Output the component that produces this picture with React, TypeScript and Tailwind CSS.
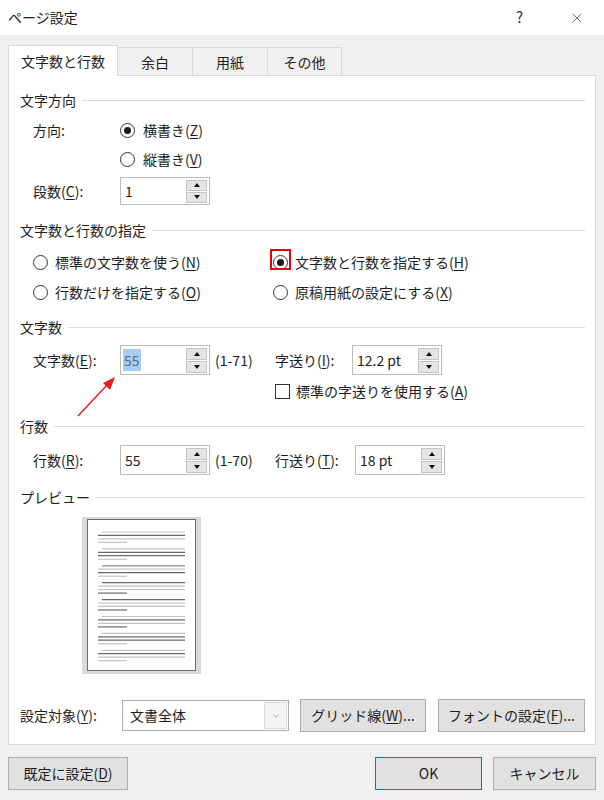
import { X, ChevronDown } from 'lucide-react'

const font = { fontFamily: '"Noto Sans CJK JP", "Noto Sans", sans-serif' }

function SectionHeader({ label, className }: { label: string; className: string }) {
  return (
    <div className={`flex items-center h-[20px] ${className}`}>
      <span className="whitespace-nowrap">{label}</span>
      <div className="flex-1 h-px bg-[#dcdcdc] ml-[6px]" />
    </div>
  )
}

function Radio({ checked }: { checked?: boolean }) {
  return (
    <span className="w-[15px] h-[15px] rounded-full border border-[#333] bg-white flex items-center justify-center shrink-0">
      {checked && <span className="w-[7px] h-[7px] rounded-full bg-[#1a1a1a]" />}
    </span>
  )
}

function SpinButtons({ small }: { small?: boolean }) {
  const btn = small
    ? 'w-[21px] h-[11px] bg-[#e5e5e5] border border-[#c4c4c4] flex items-center justify-center'
    : 'w-[21px] h-[12px] bg-[#e5e5e5] border border-[#c4c4c4] flex items-center justify-center'
  return (
    <div className="ml-auto mr-[2px] flex flex-col gap-px">
      <div className={btn}>
        <span className="w-0 h-0 border-l-[3.5px] border-r-[3.5px] border-b-[4px] border-l-transparent border-r-transparent border-b-[#111]" />
      </div>
      <div className={btn}>
        <span className="w-0 h-0 border-l-[3.5px] border-r-[3.5px] border-t-[4px] border-l-transparent border-r-transparent border-t-[#111]" />
      </div>
    </div>
  )
}

function U({ c }: { c: string }) {
  return <span className="underline underline-offset-2">{c}</span>
}

// preview page lines: [indented, full, full, short]
const groups: string[][] = [
  ['#c4c4c4', '#6a6a6a', '#c4c4c4', '#c4c4c4'],
  ['#c4c4c4', '#6a6a6a', '#6a6a6a', '#c4c4c4'],
  ['#8a8a8a', '#c4c4c4', '#6a6a6a', '#c4c4c4'],
  ['#6a6a6a', '#c4c4c4', '#c4c4c4', '#6a6a6a'],
  ['#6a6a6a', '#c4c4c4', '#c4c4c4', '#6a6a6a'],
  ['#c4c4c4', '#6a6a6a', '#c4c4c4', '#6a6a6a'],
  ['#c4c4c4', '#6a6a6a', '#6a6a6a', '#c4c4c4'],
  ['#c4c4c4', '#6a6a6a', '#c4c4c4', '#c4c4c4'],
]

function PreviewPage() {
  return (
    <div className="ml-[62px] mt-[10px] w-[119px] h-[157px] bg-[#d9d9d9] pl-[5px] pt-[2px]">
      <div className="w-[109px] h-[152px] bg-white border border-[#6b6b6b]">
        <svg width="107" height="150" viewBox="0 0 107 150">
          {groups.map((g, i) => {
            const y = 12 + i * 16.9
            return (
              <g key={i} strokeWidth="1.2">
                <line x1="14" x2="97" y1={y} y2={y} stroke={g[0]} />
                <line x1="10" x2="97" y1={y + 3.4} y2={y + 3.4} stroke={g[1]} />
                <line x1="10" x2="97" y1={y + 6.8} y2={y + 6.8} stroke={g[2]} />
                <line x1="10" x2="39" y1={y + 10.4} y2={y + 10.4} stroke={g[3]} />
              </g>
            )
          })}
        </svg>
      </div>
    </div>
  )
}

export default function App() {
  return (
    <div
      className="relative w-[604px] h-[800px] bg-[#f0f0f0] text-[14px] text-[#1e1e1e] overflow-hidden"
      style={font}
    >
      {/* Title bar */}
      <div className="h-[35px] bg-white flex items-center pl-[8px]">
        <span className="text-[14px] text-[#222]">ページ設定</span>
        <span className="ml-auto mr-[46px] text-[15px] text-[#333]">?</span>
        <X size={16} strokeWidth={1} className="mr-[19px] text-[#333]" />
      </div>

      {/* Tabs */}
      <div className="flex items-end mt-[10px] px-[8px] h-[30px]">
        <div className="relative z-10 w-[110px] h-[31px] -mb-px bg-white border border-b-0 border-[#d9d9d9] flex items-center justify-center">
          文字数と行数
        </div>
        <div className="w-[75px] h-[28px] border border-l-0 border-b-0 border-[#d9d9d9] flex items-center justify-center pt-[1px]">
          余白
        </div>
        <div className="w-[75px] h-[28px] border border-l-0 border-b-0 border-[#d9d9d9] flex items-center justify-center pt-[1px]">
          用紙
        </div>
        <div className="w-[74px] h-[28px] border border-l-0 border-b-0 border-[#d9d9d9] flex items-center justify-center pt-[1px]">
          その他
        </div>
      </div>

      {/* Panel */}
      <div className="mx-[8px] w-[588px] h-[670px] bg-white border border-[#d9d9d9] pl-[11px] pr-[10px] flex flex-col">
        <SectionHeader label="文字方向" className="mt-[14px]" />

        <div className="flex items-center h-[20px] mt-[10px]">
          <span className="ml-[13px] w-[87px]">方向:</span>
          <Radio checked />
          <span className="ml-[8px]">
            横書き(<U c="Z" />)
          </span>
        </div>
        <div className="flex items-center h-[20px] mt-[9px]">
          <span className="ml-[13px] w-[87px]" />
          <Radio />
          <span className="ml-[8px]">
            縦書き(<U c="V" />)
          </span>
        </div>
        <div className="flex items-center h-[28px] mt-[8px]">
          <span className="ml-[13px] w-[87px]">
            段数(<U c="C" />):
          </span>
          <div className="flex items-center w-[90px] h-[28px] border border-[#bcbcbc] bg-white pl-[4px]">
            <span>1</span>
            <SpinButtons small />
          </div>
        </div>

        <SectionHeader label="文字数と行数の指定" className="mt-[15px]" />

        <div className="flex items-center h-[22px] mt-[11px]">
          <div className="flex items-center w-[253px] pl-[13px]">
            <Radio />
            <span className="ml-[7px]">
              標準の文字数を使う(<U c="N" />)
            </span>
          </div>
          <div className="relative flex items-center">
            <span className="absolute left-[-3px] top-[-3px] w-[21px] h-[21px] border-2 border-red-600" />
            <Radio checked />
            <span className="ml-[7px]">
              文字数と行数を指定する(<U c="H" />)
            </span>
          </div>
        </div>
        <div className="flex items-center h-[20px] mt-[9px]">
          <div className="flex items-center w-[253px] pl-[13px]">
            <Radio />
            <span className="ml-[7px]">
              行数だけを指定する(<U c="O" />)
            </span>
          </div>
          <div className="flex items-center">
            <Radio />
            <span className="ml-[7px]">
              原稿用紙の設定にする(<U c="X" />)
            </span>
          </div>
        </div>

        <SectionHeader label="文字数" className="mt-[15px]" />

        <div className="flex items-center h-[30px] mt-[8px]">
          <span className="ml-[13px] w-[87px]">
            文字数(<U c="E" />):
          </span>
          <div className="flex items-center w-[90px] h-[30px] border border-[#bcbcbc] bg-white pl-[2px]">
            <span className="bg-[#a8cdf0] text-[#5a6e88] px-[1px] leading-[22px]">55</span>
            <SpinButtons />
          </div>
          <span className="ml-[5px] w-[60px]">(1-71)</span>
          <span className="w-[77px]">
            字送り(<U c="I" />):
          </span>
          <div className="flex items-center w-[90px] h-[30px] border border-[#bcbcbc] bg-white pl-[4px]">
            <span>12.2 pt</span>
            <SpinButtons />
          </div>
        </div>
        <div className="flex items-center h-[18px] mt-[7px]">
          <span className="ml-[255px] w-[15px] h-[15px] border border-[#333] bg-white shrink-0" />
          <span className="ml-[6px]">
            標準の字送りを使用する(<U c="A" />)
          </span>
        </div>

        <SectionHeader label="行数" className="mt-[16px]" />

        <div className="flex items-center h-[30px] mt-[9px]">
          <span className="ml-[13px] w-[87px]">
            行数(<U c="R" />):
          </span>
          <div className="flex items-center w-[90px] h-[30px] border border-[#bcbcbc] bg-white pl-[4px]">
            <span>55</span>
            <SpinButtons />
          </div>
          <span className="ml-[5px] w-[60px]">(1-70)</span>
          <span className="w-[80px]">
            行送り(<U c="T" />):
          </span>
          <div className="flex items-center w-[90px] h-[30px] border border-[#bcbcbc] bg-white pl-[4px]">
            <span>18 pt</span>
            <SpinButtons />
          </div>
        </div>

        <SectionHeader label="プレビュー" className="mt-[12px]" />

        <PreviewPage />

        <div className="flex items-center h-[33px] mt-[25px]">
          <span className="w-[102px]">
            設定対象(<U c="Y" />):
          </span>
          <div className="flex items-center w-[167px] h-[31px] border border-[#adadad] bg-white pl-[7px]">
            <span>文書全体</span>
            <div className="ml-auto mr-px w-[23px] h-[27px] bg-[#f4f4f4] border border-[#dadada] flex items-center justify-center">
              <ChevronDown size={10} strokeWidth={1.5} className="text-[#777]" />
            </div>
          </div>
          <div className="ml-[11px] w-[126px] h-[33px] bg-[#e1e1e1] border border-[#adadad] flex items-center justify-center">
            グリッド線(<U c="W" />)...
          </div>
          <div className="ml-[12px] w-[147px] h-[33px] bg-[#e1e1e1] border border-[#adadad] flex items-center justify-center">
            フォントの設定(<U c="F" />)...
          </div>
        </div>
      </div>

      {/* Bottom buttons */}
      <div className="flex items-center mt-[12px] px-[8px]">
        <div className="w-[120px] h-[33px] bg-[#e1e1e1] border border-[#adadad] flex items-center justify-center">
          既定に設定(<U c="D" />)
        </div>
        <div className="ml-auto w-[107px] h-[33px] bg-[#e1e1e1] border border-[#0078d7] flex items-center justify-center">
          OK
        </div>
        <div className="ml-[11px] w-[103px] h-[33px] bg-[#e1e1e1] border border-[#adadad] flex items-center justify-center">
          キャンセル
        </div>
      </div>

      {/* red annotation arrow */}
      <svg className="absolute left-0 top-0 pointer-events-none" width="604" height="800">
        <line x1="78" y1="416" x2="108" y2="384" stroke="#e8201a" strokeWidth="1.5" />
        <polygon points="115,377 103,383 110,390" fill="#e8201a" />
      </svg>
    </div>
  )
}
